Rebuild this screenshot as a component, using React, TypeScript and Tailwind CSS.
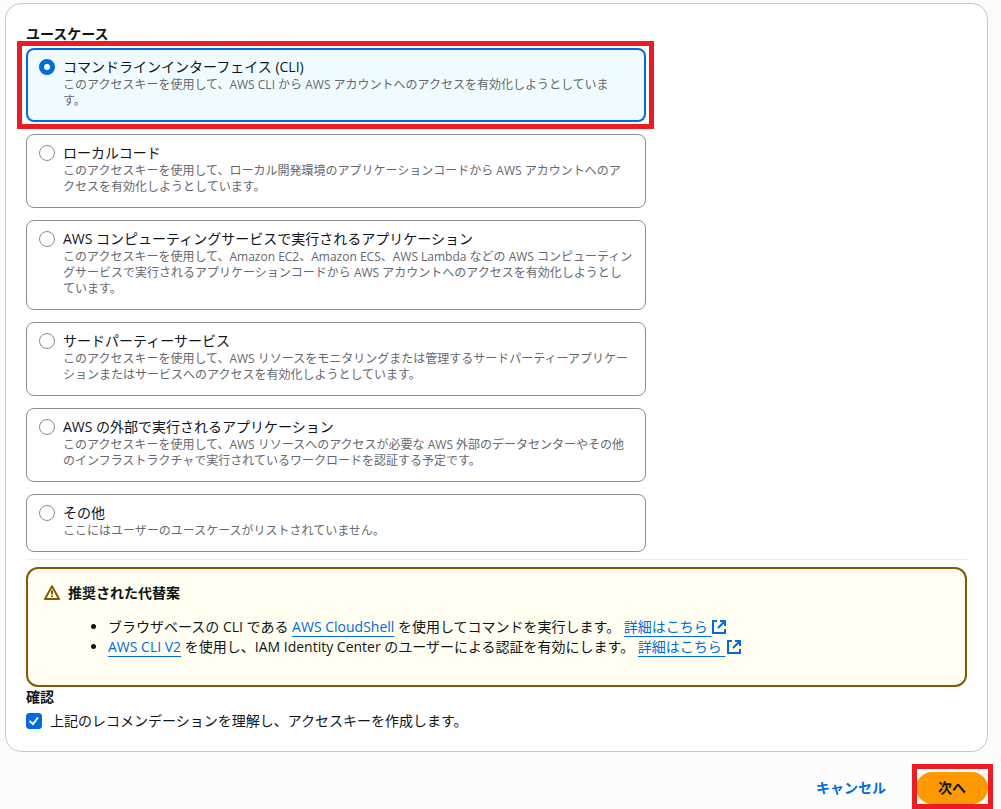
import { useState } from "react";
import type { ReactNode } from "react";

type UseCase = { id: string; title: string; description: string };

const useCases: UseCase[] = [
  {
    id: "cli",
    title: "コマンドラインインターフェイス (CLI)",
    description:
      "このアクセスキーを使用して、AWS CLI から AWS アカウントへのアクセスを有効化しようとしていま\nす。",
  },
  {
    id: "local",
    title: "ローカルコード",
    description:
      "このアクセスキーを使用して、ローカル開発環境のアプリケーションコードから AWS アカウントへのア\nクセスを有効化しようとしています。",
  },
  {
    id: "compute",
    title: "AWS コンピューティングサービスで実行されるアプリケーション",
    description:
      "このアクセスキーを使用して、Amazon EC2、Amazon ECS、AWS Lambda などの AWS コンピューティングサービスで実行されるアプリケーションコードから AWS アカウントへのアクセスを有効化しようとしています。",
  },
  {
    id: "third-party",
    title: "サードパーティーサービス",
    description:
      "このアクセスキーを使用して、AWS リソースをモニタリングまたは管理するサードパーティーアプリケーションまたはサービスへのアクセスを有効化しようとしています。",
  },
  {
    id: "outside",
    title: "AWS の外部で実行されるアプリケーション",
    description:
      "このアクセスキーを使用して、AWS リソースへのアクセスが必要な AWS 外部のデータセンターやその他のインフラストラクチャで実行されているワークロードを認証する予定です。",
  },
  {
    id: "other",
    title: "その他",
    description: "ここにはユーザーのユースケースがリストされていません。",
  },
];

function Tile({
  useCase,
  selected,
  highlighted,
  onSelect,
}: {
  useCase: UseCase;
  selected: boolean;
  highlighted: boolean;
  onSelect: () => void;
}) {
  return (
    <div className="relative">
      <label
        className={
          selected
            ? "flex gap-2 rounded-lg border-2 border-[#006ce0] bg-[#f0fbff] px-[11px] pt-[7px] pb-[11px]"
            : "flex gap-2 rounded-lg border border-[#8c8c94] bg-white px-3 pt-2 pb-3"
        }
      >
        <input
          type="radio"
          name="use-case"
          checked={selected}
          onChange={onSelect}
          aria-describedby={`${useCase.id}-description`}
          className="mt-0.5 size-4 shrink-0 appearance-none rounded-full border border-[#8c8c94] bg-white checked:border-5 checked:border-[#006ce0]"
        />
        <span className="min-w-0 flex-1">
          <span className="block">{useCase.title}</span>
          <span
            id={`${useCase.id}-description`}
            className="block text-xs leading-4 whitespace-pre-line text-[#656871]"
          >
            {useCase.description}
          </span>
        </span>
      </label>
      {highlighted && (
        <div className="pointer-events-none absolute -inset-y-[7px] -right-2 -left-[9px] border-5 border-[#ed1c24]" />
      )}
    </div>
  );
}

function WarningIcon() {
  return (
    <svg viewBox="0 0 16 16" className="mt-0.5 size-4 shrink-0" fill="none" stroke="#855900" strokeWidth="2" aria-hidden="true">
      <path d="M8 1.2 15 14H1L8 1.2Z" strokeLinejoin="round" />
      <path d="M8 5.5v4M8 10.5v1.6" />
    </svg>
  );
}

function ExternalIcon() {
  return (
    <svg viewBox="0 0 16 16" className="inline-block size-4 align-[-3px]" fill="none" stroke="currentColor" strokeWidth="2" aria-hidden="true">
      <path d="M9 2h5v5M7 9l7-7M14 10v4H2V2h4" />
    </svg>
  );
}

function Link({ children, external = false }: { children: ReactNode; external?: boolean }) {
  return (
    <a href="#" className="text-[#006ce0]">
      <span className="underline decoration-1 underline-offset-4">
        {children}
        {external && "\u00a0"}
      </span>
      {external && <ExternalIcon />}
    </a>
  );
}

export default function App() {
  const [selected, setSelected] = useState("cli");
  const [confirmed, setConfirmed] = useState(true);

  return (
    <form
      lang="ja"
      onSubmit={(event) => event.preventDefault()}
      className="min-h-screen bg-[#fcfcfd] pt-[3px] pr-[13px] pb-[5px] pl-[5px] font-['Open_Sans','Noto_Sans_CJK_JP',sans-serif] text-sm leading-5 text-[#0f141a]"
    >
      <main className="rounded-2xl border border-[#c6c6cd] bg-white p-5">
        <fieldset className="max-w-[620px]">
          <legend className="mb-1 font-bold">ユースケース</legend>
          <div className="flex flex-col gap-3">
            {useCases.map((useCase) => (
              <Tile
                key={useCase.id}
                useCase={useCase}
                selected={selected === useCase.id}
                highlighted={useCase.id === "cli"}
                onSelect={() => setSelected(useCase.id)}
              />
            ))}
          </div>
        </fieldset>

        <hr className="my-[7px] border-[#ebebf0]" />

        <section className="flex gap-2 rounded-xl border-2 border-[#855900] bg-[#fffef0] px-4 py-3.5">
          <WarningIcon />
          <div className="min-w-0 flex-1">
            <h2 className="font-bold">推奨された代替案</h2>
            <ul className="my-3.5 list-disc pl-10">
              <li>
                ブラウザベースの CLI である <Link>AWS CloudShell</Link> を使用してコマンドを実行します。{" "}
                <Link external>詳細はこちら</Link>
              </li>
              <li>
                <Link>AWS CLI V2</Link> を使用し、IAM Identity Center のユーザーによる認証を有効にします。{" "}
                <Link external>詳細はこちら</Link>
              </li>
            </ul>
          </div>
        </section>

        <fieldset>
          <legend className="mb-1 font-bold">確認</legend>
          <label className="flex gap-2">
            <span className="mt-0.5 grid size-4 shrink-0">
              <input
                type="checkbox"
                checked={confirmed}
                onChange={(event) => setConfirmed(event.target.checked)}
                className="peer col-start-1 row-start-1 size-4 appearance-none rounded-[3px] border border-[#8c8c94] bg-white checked:border-[#006ce0] checked:bg-[#006ce0]"
              />
              <svg
                viewBox="0 0 16 16"
                className="pointer-events-none invisible col-start-1 row-start-1 size-4 peer-checked:visible"
                fill="none"
                stroke="#fff"
                strokeWidth="2"
                aria-hidden="true"
              >
                <path d="M3.5 8 7 11l5-6.5" />
              </svg>
            </span>
            <span>上記のレコメンデーションを理解し、アクセスキーを作成します。</span>
          </label>
        </fieldset>
      </main>

      <footer className="mt-5 flex justify-end gap-2">
        <button type="button" className="h-8 rounded-full px-[22px] font-bold text-[#006ce0]">
          キャンセル
        </button>
        <div className="relative">
          <button type="submit" className="h-8 rounded-full bg-[#ff9900] px-[22px] font-bold">
            次へ
          </button>
          <div className="pointer-events-none absolute -top-2 -right-[5px] -bottom-[5px] -left-1 border-5 border-[#ed1c24]" />
        </div>
      </footer>
    </form>
  );
}
